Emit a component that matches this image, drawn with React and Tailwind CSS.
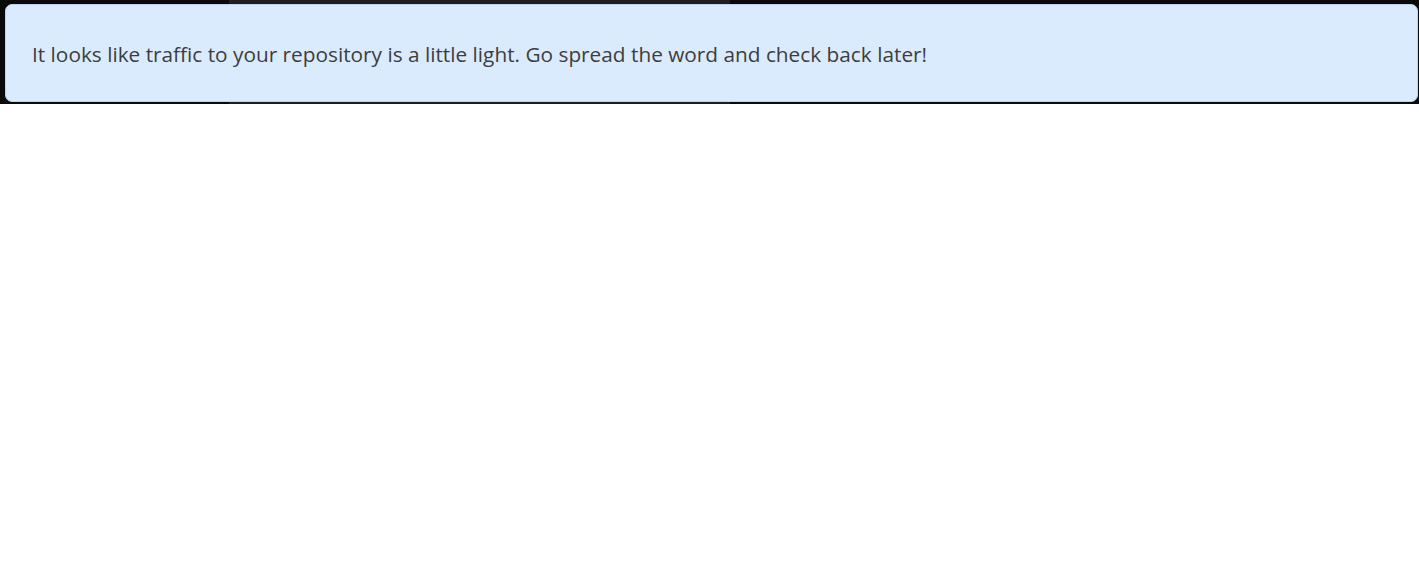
export default function App() {
  return (
    <div className="w-[1419px] h-[577px] bg-white" style={{ fontFamily: '"Open Sans", "Noto Sans", sans-serif' }}>
      <div className="relative h-[104px] bg-[#0a0a0a] pt-[4px] pl-[5px] pr-[1px]">
        <div className="absolute left-[229px] top-0 w-[501px] h-[104px] bg-[#1e1e1e]" />
        <div className="relative h-[98px] rounded-[7px] border border-[#b6d4f2] bg-[#dbebfe] flex items-center pl-[26px] pt-[3px]">
          <p className="text-[20.8px] text-[#3d3d3d] leading-none">
            It looks like traffic to your repository is a little light. Go spread the word and check back later!
          </p>
        </div>
      </div>
    </div>
  );
}
